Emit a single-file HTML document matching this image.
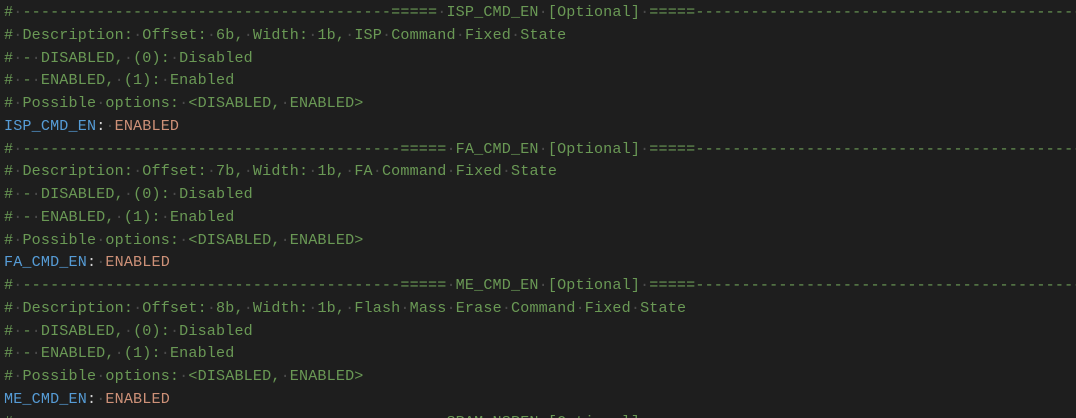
<!DOCTYPE html>
<html><head><meta charset="utf-8"><style>
html,body{margin:0;padding:0;background:#1e1e1e;width:1076px;height:418px;overflow:hidden}
pre{margin:0;padding:1px 0 0 4px;width:1072px;height:417px;overflow:hidden;font-family:"Liberation Mono",monospace;font-size:15.1px;letter-spacing:0.16px;line-height:22.75px;white-space:pre;color:#d4d4d4}
.c{color:#6a9955}.k{color:#569cd6}.v{color:#ce9178}.d{color:#4a4a4a}
</style></head><body><pre id="p"></pre>
<script>
const L=[];
const dash=n=>'-'.repeat(n);
function block(name,desc,pre){
 L.push(['c','# '+dash(pre)+'===== '+name+' [Optional] ====='+dash(44)]);
 L.push(['c','# Description: '+desc]);
 L.push(['c','# - DISABLED, (0): Disabled']);
 L.push(['c','# - ENABLED, (1): Enabled']);
 L.push(['c','# Possible options: <DISABLED, ENABLED>']);
 L.push(['kv',name]);
}
block('ISP_CMD_EN','Offset: 6b, Width: 1b, ISP Command Fixed State',40);
block('FA_CMD_EN','Offset: 7b, Width: 1b, FA Command Fixed State',41);
block('ME_CMD_EN','Offset: 8b, Width: 1b, Flash Mass Erase Command Fixed State',41);
L.push(['c','# '+dash(40)+'===== SRAM_NSPEN [Optional] ====='+dash(40)]);
const esc=s=>s.replace(/&/g,'&amp;').replace(/</g,'&lt;').replace(/>/g,'&gt;');
const sp=s=>esc(s).split(' ').join('<span class="d">·</span>');
let h='';
for(const [t,s] of L){
 if(t==='c')h+='<span class="c">'+sp(s)+'</span>\n';
 else h+='<span class="k">'+s+'</span>:<span class="d">·</span><span class="v">ENABLED</span>\n';
}
document.getElementById('p').innerHTML=h;
</script></body></html>
